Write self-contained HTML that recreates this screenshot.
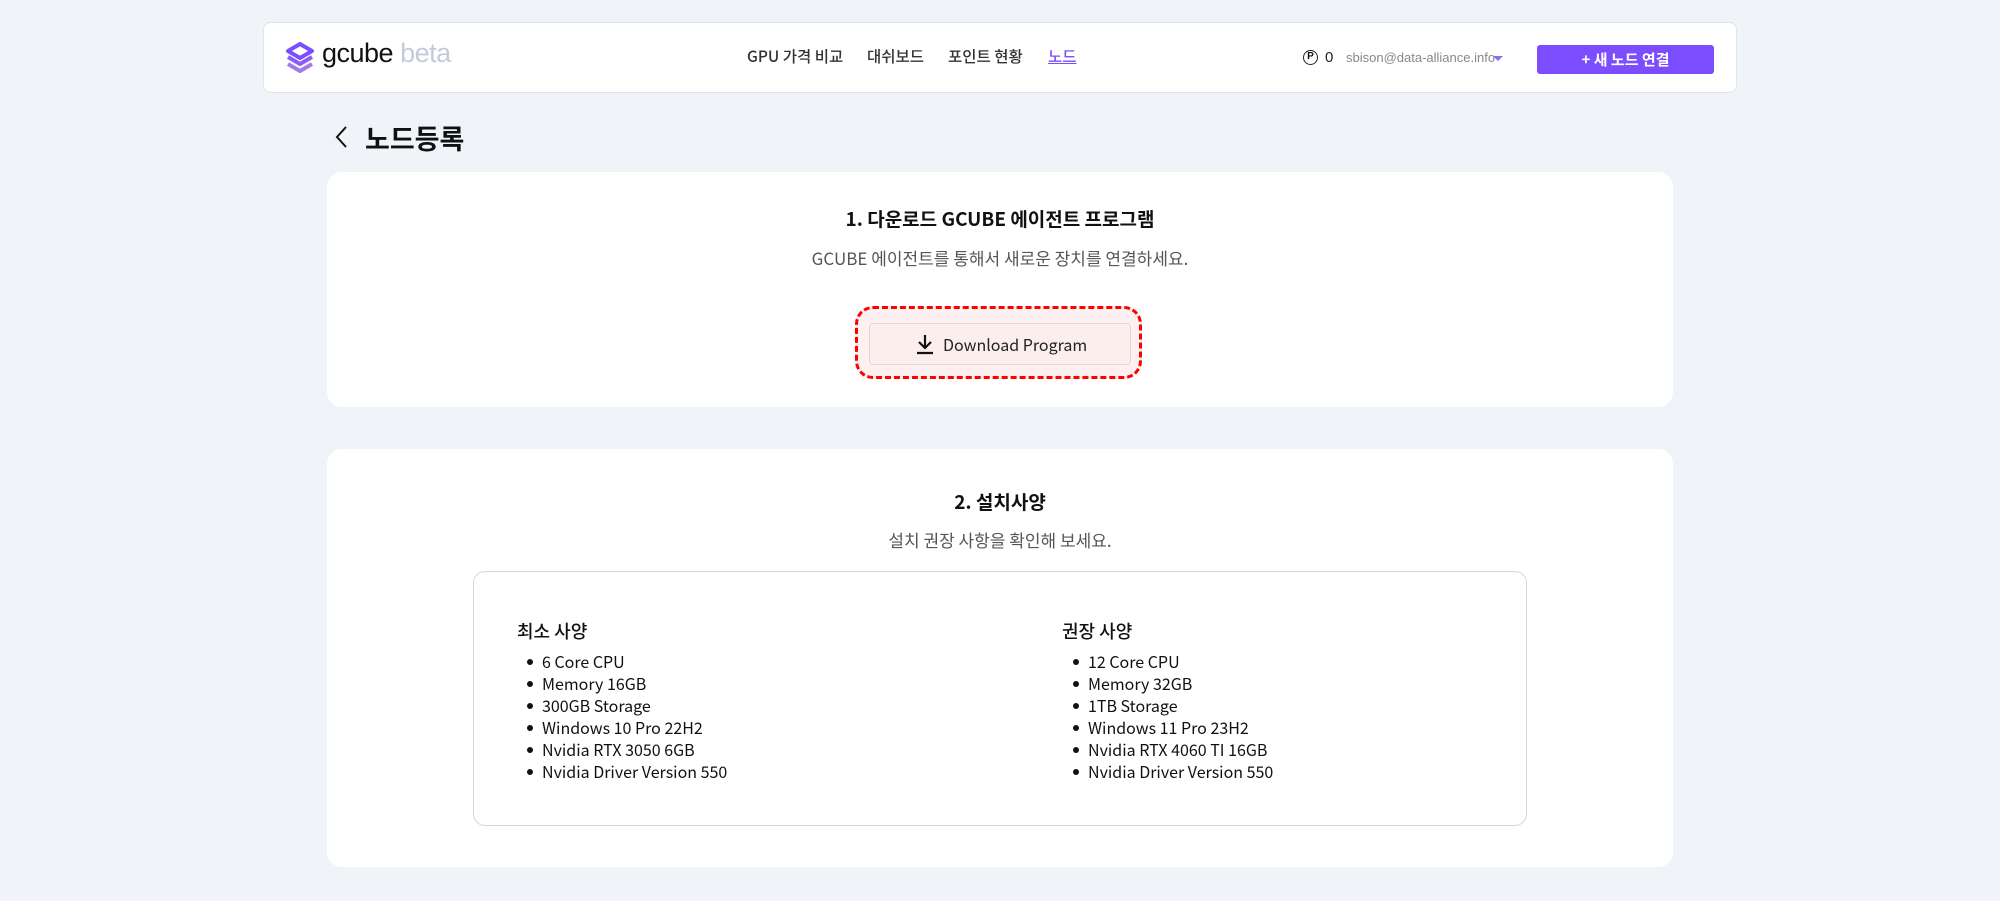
<!DOCTYPE html>
<html><head><meta charset="utf-8"><style>
*{box-sizing:border-box;margin:0;padding:0}
body{width:2000px;height:901px;background:#f0f3f8;font-family:"Liberation Sans","Noto Sans CJK KR",sans-serif;color:#111;position:relative;overflow:hidden}
.k{font-family:"Noto Sans CJK KR","Liberation Sans",sans-serif}
.abs{position:absolute}
.hdr{left:263px;top:22px;width:1474px;height:71px;background:#fff;border:1px solid #dfe3ea;border-radius:8px}
.nav{top:45px;font-size:15.5px;font-weight:500;color:#333}
.card{left:327px;width:1346px;background:#fff;border-radius:15px}
.ctr{left:327px;width:1346px;text-align:center}
li{list-style:none;position:relative;font-size:16px;height:22px;line-height:22px}
li:before{content:"";position:absolute;left:-15px;top:9px;width:6px;height:6px;border-radius:50%;background:#111}
</style></head><body>
<div class="abs hdr"></div>
<svg class="abs" style="left:285px;top:42px" width="30" height="32" viewBox="0 0 30 32">
<path d="M15 2 L27 9 L15 16 L3 9 Z" fill="none" stroke="#7c4dff" stroke-width="4" stroke-linejoin="round"/>
<path d="M3 15 L15 22 L27 15" fill="none" stroke="#8b5cf6" stroke-width="4" stroke-linejoin="round"/>
<path d="M3 22 L15 29 L27 22" fill="none" stroke="#9f7aea" stroke-width="4" stroke-linejoin="round"/>
</svg>
<div class="abs" style="left:322px;top:38px;font-size:27px;font-family:'Liberation Sans',sans-serif;letter-spacing:-0.5px"><span style="color:#111">gcube</span> <span style="color:#c5cad8">beta</span></div>
<div class="abs nav k" style="left:747px">GPU 가격 비교</div>
<div class="abs nav k" style="left:867px">대쉬보드</div>
<div class="abs nav k" style="left:948px">포인트 현황</div>
<div class="abs nav k" style="left:1048px;color:#7c4dff;text-decoration:underline">노드</div>
<div class="abs" style="left:1303px;top:50px;width:15px;height:15px;border:1.5px solid #222;border-radius:50%;font-size:10px;line-height:12px;text-align:center;font-weight:bold">P</div>
<div class="abs" style="left:1325px;top:49px;font-size:15px;color:#222">0</div>
<div class="abs" style="left:1346px;top:50px;font-size:13px;color:#888">sbison@data-alliance.info</div>
<div class="abs" style="left:1493px;top:56px;border-left:5px solid transparent;border-right:5px solid transparent;border-top:5px solid #8b6cf6"></div>
<div class="abs k" style="left:1537px;top:45px;width:177px;height:29px;background:#7c4dff;border-radius:3px;color:#fff;font-size:15px;font-weight:700;text-align:center;line-height:29px">+ 새 노드 연결</div>

<svg class="abs" style="left:334px;top:125px" width="16" height="24" viewBox="0 0 16 24"><path d="M12 2 L3 12 L12 22" fill="none" stroke="#111" stroke-width="2"/></svg>
<div class="abs k" style="left:365px;top:118px;font-size:27px;font-weight:700">노드등록</div>

<div class="abs card" style="top:172px;height:235px"></div>
<div class="abs ctr k" style="top:205px;font-size:19px;font-weight:700">1. 다운로드 GCUBE 에이전트 프로그램</div>
<div class="abs ctr k" style="top:245px;font-size:17px;color:#555">GCUBE 에이전트를 통해서 새로운 장치를 연결하세요.</div>
<div class="abs" style="left:855px;top:306px;width:287px;height:73px;border:3.5px dashed #ff0000;border-radius:18px;background:#fdf0f0"></div>
<div class="abs" style="left:869px;top:323px;width:262px;height:42px;border:1px solid #e2d7d7;border-radius:4px;background:#fdeeee"></div>
<svg class="abs" style="left:915px;top:333px" width="20" height="22" viewBox="0 0 20 22"><path d="M10 2 V14 M4 9 L10 15 L16 9 M2 20 H18" fill="none" stroke="#111" stroke-width="2.2"/></svg>
<div class="abs k" style="left:943px;top:332px;font-size:16px;color:#222">Download Program</div>

<div class="abs card" style="top:449px;height:418px"></div>
<div class="abs ctr k" style="top:488px;font-size:19px;font-weight:700">2. 설치사양</div>
<div class="abs ctr k" style="top:527px;font-size:17px;color:#555">설치 권장 사항을 확인해 보세요.</div>
<div class="abs" style="left:473px;top:571px;width:1054px;height:255px;border:1.5px solid #d8d8d8;border-radius:12px"></div>
<div class="abs k" style="left:517px;top:618px;font-size:18px;font-weight:500">최소 사양</div>
<ul class="abs k" style="left:542px;top:650px">
<li>6 Core CPU</li><li>Memory 16GB</li><li>300GB Storage</li><li>Windows 10 Pro 22H2</li><li>Nvidia RTX 3050 6GB</li><li>Nvidia Driver Version 550</li></ul>
<div class="abs k" style="left:1062px;top:618px;font-size:18px;font-weight:500">권장 사양</div>
<ul class="abs k" style="left:1088px;top:650px">
<li>12 Core CPU</li><li>Memory 32GB</li><li>1TB Storage</li><li>Windows 11 Pro 23H2</li><li>Nvidia RTX 4060 TI 16GB</li><li>Nvidia Driver Version 550</li></ul>
</body></html>
